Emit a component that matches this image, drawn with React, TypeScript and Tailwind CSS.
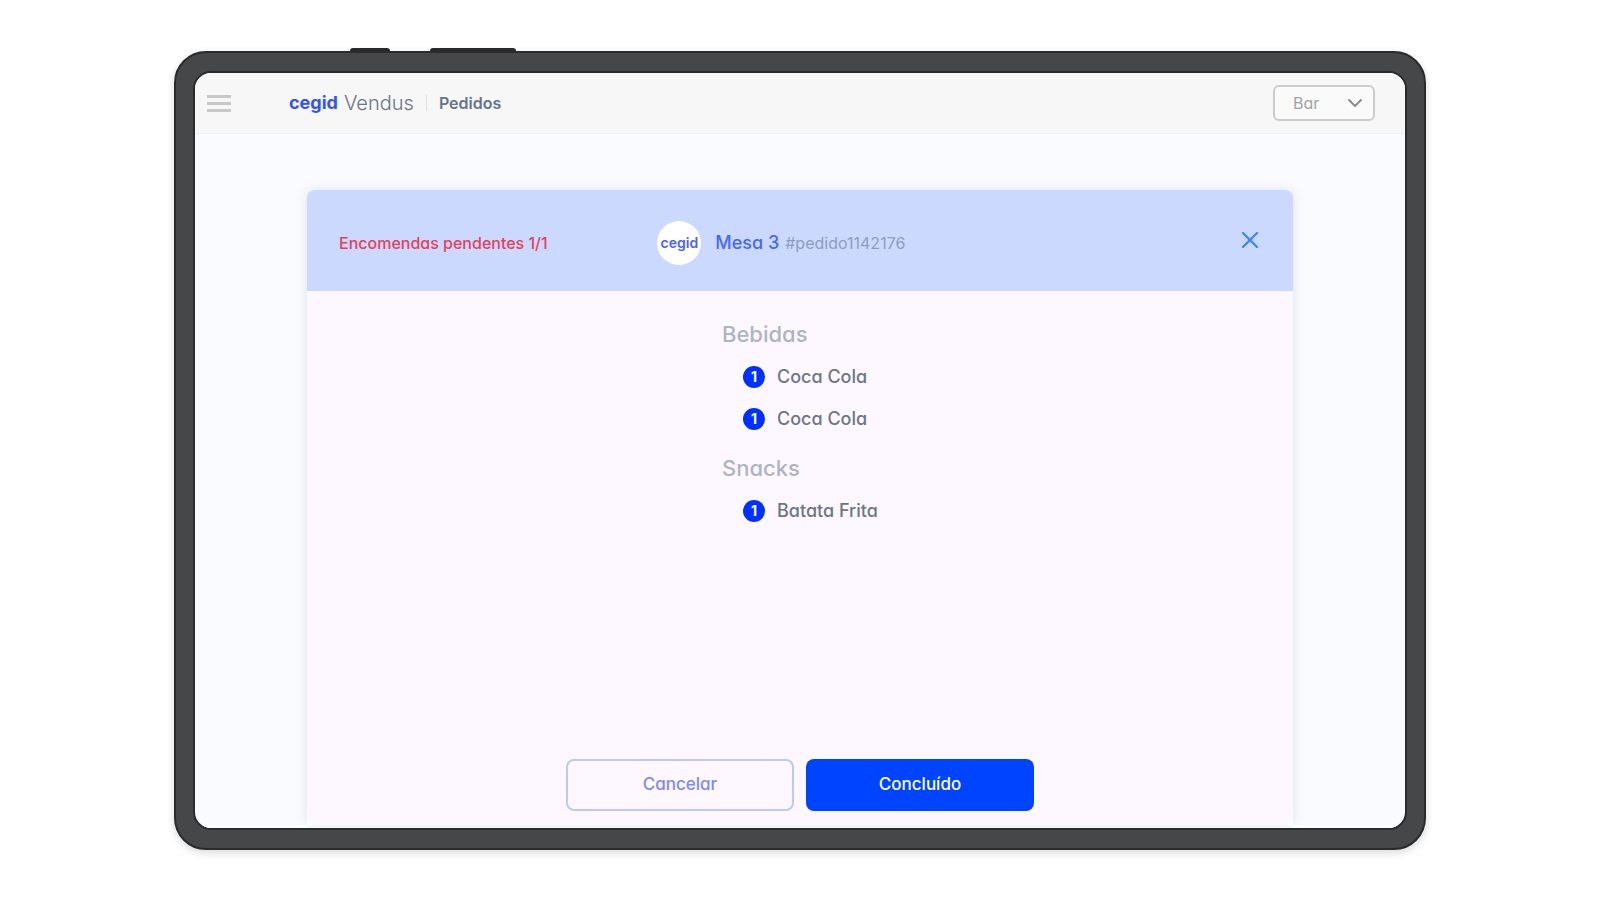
import React from "react";
import { ChevronDown, X } from "lucide-react";

const categories = [
  {
    name: "Bebidas",
    items: [
      { id: 1, quantity: 1, name: "Coca Cola" },
      { id: 2, quantity: 1, name: "Coca Cola" },
    ],
  },
  {
    name: "Snacks",
    items: [{ id: 3, quantity: 1, name: "Batata Frita" }],
  },
];

function TopBar() {
  return (
    <header className="flex h-[61px] shrink-0 items-center border-b border-[#eef0f4] bg-[#f7f7f7] pr-[30px] pl-3">
      <button type="button" aria-label="Menu" className="flex w-6 flex-col gap-1">
        <span className="h-[3px] bg-[#c8c8c8]" />
        <span className="h-[3px] bg-[#c8c8c8]" />
        <span className="h-[3px] bg-[#c8c8c8]" />
      </button>
      <div className="ml-[58px] flex items-center">
        <span className="text-lg font-bold text-[#3352fb]">cegid</span>
        <span className="ml-1.5 text-xl font-light text-[#6b7684]">Vendus</span>
        <span className="mx-3 h-4 w-px bg-[#dcdfe3]" />
        <h1 className="text-base font-semibold text-[#66748a]">Pedidos</h1>
      </div>
      <div className="relative ml-auto">
        <select
          aria-label="Local"
          className="h-9 w-[102px] appearance-none rounded-md border-2 border-[#cccccc] bg-[#fafafa] pl-[18px] text-base text-[#a3a3a3]"
        >
          <option>Bar</option>
        </select>
        <ChevronDown
          size={24}
          strokeWidth={2}
          className="pointer-events-none absolute top-1.5 right-2 text-[#8c8c8c]"
        />
      </div>
    </header>
  );
}

function OrderHeader() {
  return (
    <div className="flex h-[101px] shrink-0 items-center rounded-t-lg bg-[#ccd9ff] pt-1 pr-[29px] pl-8">
      <p className="w-1/3 shrink-0 text-base font-medium text-[#e5405a]">
        Encomendas pendentes 1/1
      </p>
      <div className="ml-2.5 flex items-center whitespace-nowrap">
        <span className="flex size-11 items-center justify-center rounded-full bg-white text-sm font-semibold text-[#4a62f5]">
          cegid
        </span>
        <h2 className="ml-3.5 text-lg font-medium text-[#4468fb]">Mesa 3</h2>
        <span className="ml-1.5 text-base text-[#8e9dbd]">#pedido1142176</span>
      </div>
      <button type="button" aria-label="Fechar" className="mb-1.5 ml-auto text-[#3f86f5]">
        <X size={28} strokeWidth={2} />
      </button>
    </div>
  );
}

function OrderItems() {
  return (
    <div className="mx-auto mt-[29px] w-[156px] whitespace-nowrap">
      {categories.map((category) => (
        <section key={category.name} className="mb-3.5">
          <h3 className="text-[22px] leading-7 font-medium text-[#aeb4c3]">
            {category.name}
          </h3>
          <ul className="mt-2">
            {category.items.map((item) => (
              <li key={item.id} className="flex h-[42px] items-center pl-[21px]">
                <span className="flex size-[22px] items-center justify-center rounded-full bg-[#0030ff] text-sm font-bold text-white">
                  {item.quantity}
                </span>
                <span className="ml-3 text-lg font-medium text-[#6b7688]">
                  {item.name}
                </span>
              </li>
            ))}
          </ul>
        </section>
      ))}
    </div>
  );
}

export default function App() {
  return (
    <div className="flex min-h-screen flex-col bg-white px-[174px] pt-12 pb-[50px] font-['Inter','Noto_Sans',sans-serif] [font-feature-settings:'cv11','ss03']">
      {/* Volume and power keys */}
      <div className="flex h-[3px] gap-10 pl-44">
        <span className="w-10 rounded-t-sm bg-[#2b2b2b]" />
        <span className="w-[86px] rounded-t-sm bg-[#2b2b2b]" />
      </div>
      <div className="flex flex-1 flex-col rounded-[32px] border-2 border-[#2a2b2c] bg-[#464748] px-[17px] py-[18px] shadow-[0_3px_8px_rgba(0,0,0,0.15)]">
        <div className="flex flex-1 flex-col overflow-hidden rounded-[18px] border-2 border-[#2a2b2c] bg-[#f9fbff]">
          <TopBar />
          <main className="flex flex-1 flex-col border-b-3 border-white px-28 pt-14">
            <article className="flex flex-1 flex-col rounded-t-lg bg-[#fdf7ff] shadow-[0_0_12px_rgba(60,80,110,0.14)]">
              <OrderHeader />
              <OrderItems />
              <div className="mt-auto flex justify-center gap-3 pb-3.5">
                <button
                  type="button"
                  className="h-[52px] w-[228px] rounded-lg border-2 border-[#bcc6ff] text-[17px] font-medium text-[#7c89fa]"
                >
                  Cancelar
                </button>
                <button
                  type="button"
                  className="h-[52px] w-[228px] rounded-lg bg-[#0044ff] text-[17px] font-medium text-white"
                >
                  Concluído
                </button>
              </div>
            </article>
          </main>
        </div>
      </div>
    </div>
  );
}
